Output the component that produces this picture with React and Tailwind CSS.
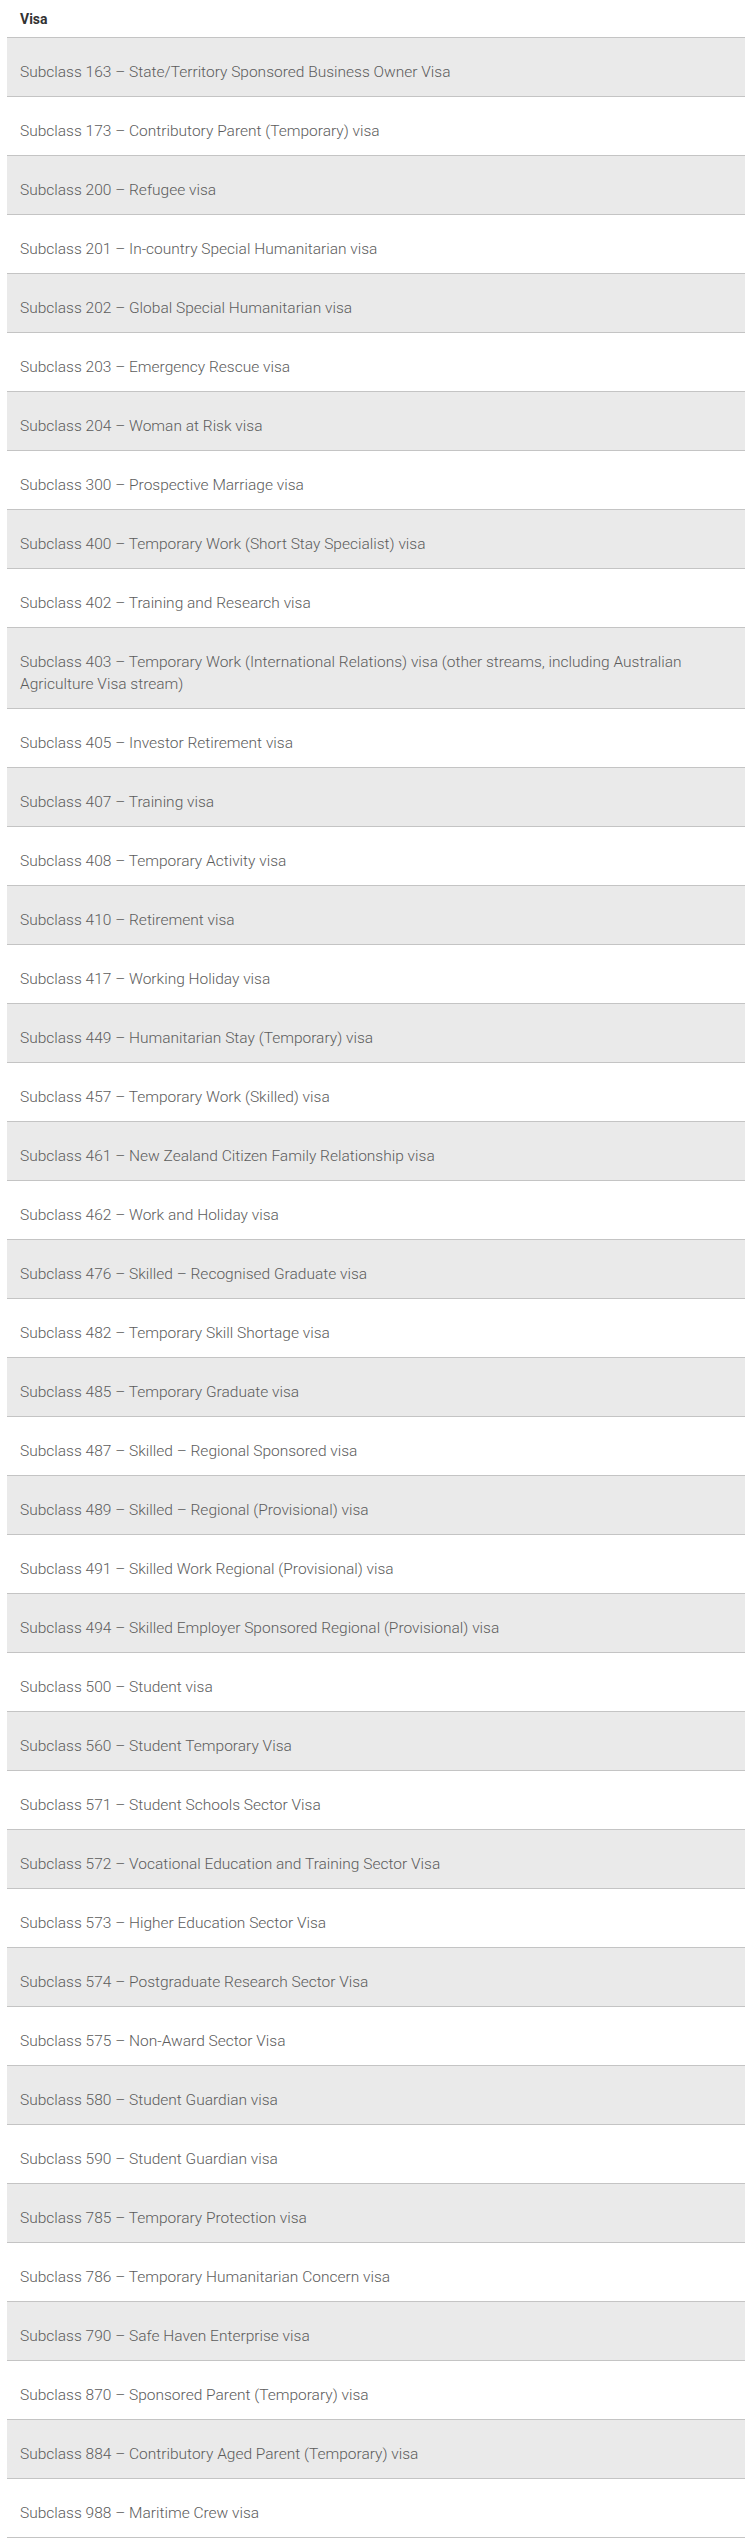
import React from "react";

const visas = [
  "Subclass 163 – State/Territory Sponsored Business Owner Visa",
  "Subclass 173 – Contributory Parent (Temporary) visa",
  "Subclass 200 – Refugee visa",
  "Subclass 201 – In-country Special Humanitarian visa",
  "Subclass 202 – Global Special Humanitarian visa",
  "Subclass 203 – Emergency Rescue visa",
  "Subclass 204 – Woman at Risk visa",
  "Subclass 300 – Prospective Marriage visa",
  "Subclass 400 – Temporary Work (Short Stay Specialist) visa",
  "Subclass 402 – Training and Research visa",
  "Subclass 403 – Temporary Work (International Relations) visa (other streams, including Australian Agriculture Visa stream)",
  "Subclass 405 – Investor Retirement visa",
  "Subclass 407 – Training visa",
  "Subclass 408 – Temporary Activity visa",
  "Subclass 410 – Retirement visa",
  "Subclass 417 – Working Holiday visa",
  "Subclass 449 – Humanitarian Stay (Temporary) visa",
  "Subclass 457 – Temporary Work (Skilled) visa",
  "Subclass 461 – New Zealand Citizen Family Relationship visa",
  "Subclass 462 – Work and Holiday visa",
  "Subclass 476 – Skilled – Recognised Graduate visa",
  "Subclass 482 – Temporary Skill Shortage visa",
  "Subclass 485 – Temporary Graduate visa",
  "Subclass 487 – Skilled – Regional Sponsored visa",
  "Subclass 489 – Skilled – Regional (Provisional) visa",
  "Subclass 491 – Skilled Work Regional (Provisional) visa",
  "Subclass 494 – Skilled Employer Sponsored Regional (Provisional) visa",
  "Subclass 500 – Student visa",
  "Subclass 560 – Student Temporary Visa",
  "Subclass 571 – Student Schools Sector Visa",
  "Subclass 572 – Vocational Education and Training Sector Visa",
  "Subclass 573 – Higher Education Sector Visa",
  "Subclass 574 – Postgraduate Research Sector Visa",
  "Subclass 575 – Non-Award Sector Visa",
  "Subclass 580 – Student Guardian visa",
  "Subclass 590 – Student Guardian visa",
  "Subclass 785 – Temporary Protection visa",
  "Subclass 786 – Temporary Humanitarian Concern visa",
  "Subclass 790 – Safe Haven Enterprise visa",
  "Subclass 870 – Sponsored Parent (Temporary) visa",
  "Subclass 884 – Contributory Aged Parent (Temporary) visa",
  "Subclass 988 – Maritime Crew visa",
];

const App = () => {
  return (
    <div className="min-h-screen bg-white px-[7px] pb-[8px] font-['Roboto',sans-serif]">
      <table className="w-full border-collapse">
        <thead>
          <tr className="border-b border-[#c4c4c4]">
            <th className="h-[37px] px-[13px] pb-[7px] text-left align-bottom text-[14px] font-bold text-[#333]">
              Visa
            </th>
          </tr>
        </thead>
        <tbody>
          {visas.map((v, i) => (
            <tr
              key={v}
              className={`border-b border-[#c4c4c4] ${
                i % 2 === 0 ? "bg-[#eaeaea]" : "bg-white"
              }`}
            >
              <td className="pl-[13px] pr-[20px] pt-[23px] pb-[13px] text-[15.5px] font-light leading-[22px] text-[#5c5c5c]">
                {v}
              </td>
            </tr>
          ))}
        </tbody>
      </table>
    </div>
  );
};

export default App;
